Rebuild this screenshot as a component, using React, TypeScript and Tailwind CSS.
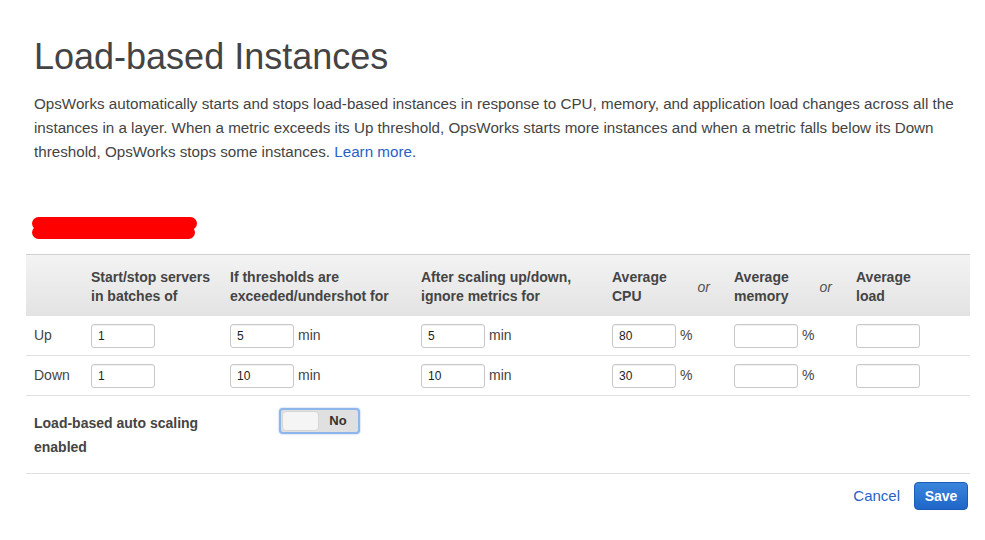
import React from 'react';

const font = { fontFamily: '"Liberation Sans", Arial, Helvetica, sans-serif' };

interface Row {
  label: string;
  batch: string;
  threshold: string;
  ignore: string;
  cpu: string;
}

const rows: Row[] = [
  { label: 'Up', batch: '1', threshold: '5', ignore: '5', cpu: '80' },
  { label: 'Down', batch: '1', threshold: '10', ignore: '10', cpu: '30' },
];

const Field = ({ value }: { value: string }) => (
  <input
    readOnly
    value={value}
    className="h-[24px] w-[64px] rounded-[3px] border border-[#c8c8c8] bg-white px-[6px] text-[12px] text-[#222] shadow-[inset_0_1px_1px_rgba(0,0,0,0.06)] outline-none"
  />
);

const Unit = ({ children }: { children: React.ReactNode }) => (
  <span className="ml-[4px] text-[14px] text-[#444]">{children}</span>
);

const App = () => {
  return (
    <div className="h-[540px] w-[985px] overflow-hidden bg-white text-[#444]" style={font}>
      <div className="px-[34px] pt-[35px]">
        <h1 className="text-[36px] leading-[43px] font-normal text-[#444]">Load-based Instances</h1>
        <p className="mt-[14px] w-[935px] text-[15.2px] leading-[24px] text-[#444]">
          OpsWorks automatically starts and stops load-based instances in response to CPU, memory, and application load
          changes across all the instances in a layer. When a metric exceeds its Up threshold, OpsWorks starts more
          instances and when a metric falls below its Down threshold, OpsWorks stops some instances.{' '}
          <span><a className="text-[#2a5fc7]">Learn more</a>.</span>
        </p>

        {/* redacted layer name */}
        <div className="mt-[53px] ml-[-2px] flex w-[165px] flex-col">
          <div className="h-[13px] w-[165px] rounded-full bg-[#ff0000]" />
          <div className="mt-[-4px] h-[13px] w-[163px] rounded-full bg-[#ff0000]" />
        </div>
      </div>

      <div className="mt-[15px] ml-[26px] w-[944px]">
        {/* header */}
        <div className="flex h-[62px] border-t border-[#d0d0d0] bg-linear-to-b from-[#f3f3f3] to-[#e3e3e3] pt-[13px] text-[14px] leading-[19px] font-bold text-[#444]">
          <div className="w-[65px]" />
          <div className="w-[139px]">Start/stop servers<br />in batches of</div>
          <div className="w-[191px]">If thresholds are<br />exceeded/undershot for</div>
          <div className="w-[191px]">After scaling up/down,<br />ignore metrics for</div>
          <div className="flex w-[122px] items-start justify-between pr-[24px]">
            <span>Average<br />CPU</span>
            <span className="mt-[10px] font-normal italic text-[#555]">or</span>
          </div>
          <div className="flex w-[122px] items-start justify-between pr-[24px]">
            <span>Average<br />memory</span>
            <span className="mt-[10px] font-normal italic text-[#555]">or</span>
          </div>
          <div className="w-[114px]">Average<br />load</div>
        </div>

        {rows.map((row) => (
          <div key={row.label} className="flex h-[40px] items-center border-b border-[#e0e0e0] text-[14px]">
            <div className="w-[65px] pl-[8px]">{row.label}</div>
            <div className="w-[139px]"><Field value={row.batch} /></div>
            <div className="flex w-[191px] items-center"><Field value={row.threshold} /><Unit>min</Unit></div>
            <div className="flex w-[191px] items-center"><Field value={row.ignore} /><Unit>min</Unit></div>
            <div className="flex w-[122px] items-center"><Field value={row.cpu} /><Unit>%</Unit></div>
            <div className="flex w-[122px] items-center"><Field value="" /><Unit>%</Unit></div>
            <div className="w-[114px]"><Field value="" /></div>
          </div>
        ))}

        {/* auto scaling toggle */}
        <div className="flex border-b border-[#e0e0e0] pt-[15px] pb-[14px]">
          <div className="w-[253px] pl-[8px] text-[14px] leading-[24px] font-bold text-[#444]">
            Load-based auto scaling<br />enabled
          </div>
          <div className="mt-[-3px] flex h-[26px] w-[81px] rounded-[4px] border-2 border-[#8fb6ea] bg-[#e0e0e0] p-[1px] shadow-[0_0_2px_rgba(80,140,220,0.6)]">
            <div className="h-full w-[37px] rounded-[4px] border border-[#d6d6d6] bg-[#f5f5f5]" />
            <div className="flex flex-1 items-center justify-center text-[13px] font-bold text-[#333]">No</div>
          </div>
        </div>

        <div className="flex items-center justify-end pt-[8px]">
          <a className="mr-[14px] text-[15px] text-[#2a5fc7]">Cancel</a>
          <button className="mr-[2px] h-[28px] w-[54px] rounded-[4px] border border-[#1a5cb8] bg-linear-to-b from-[#3a85dc] to-[#1f66c8] text-[14px] font-bold text-white">
            Save
          </button>
        </div>
      </div>
    </div>
  );
};

export default App;
